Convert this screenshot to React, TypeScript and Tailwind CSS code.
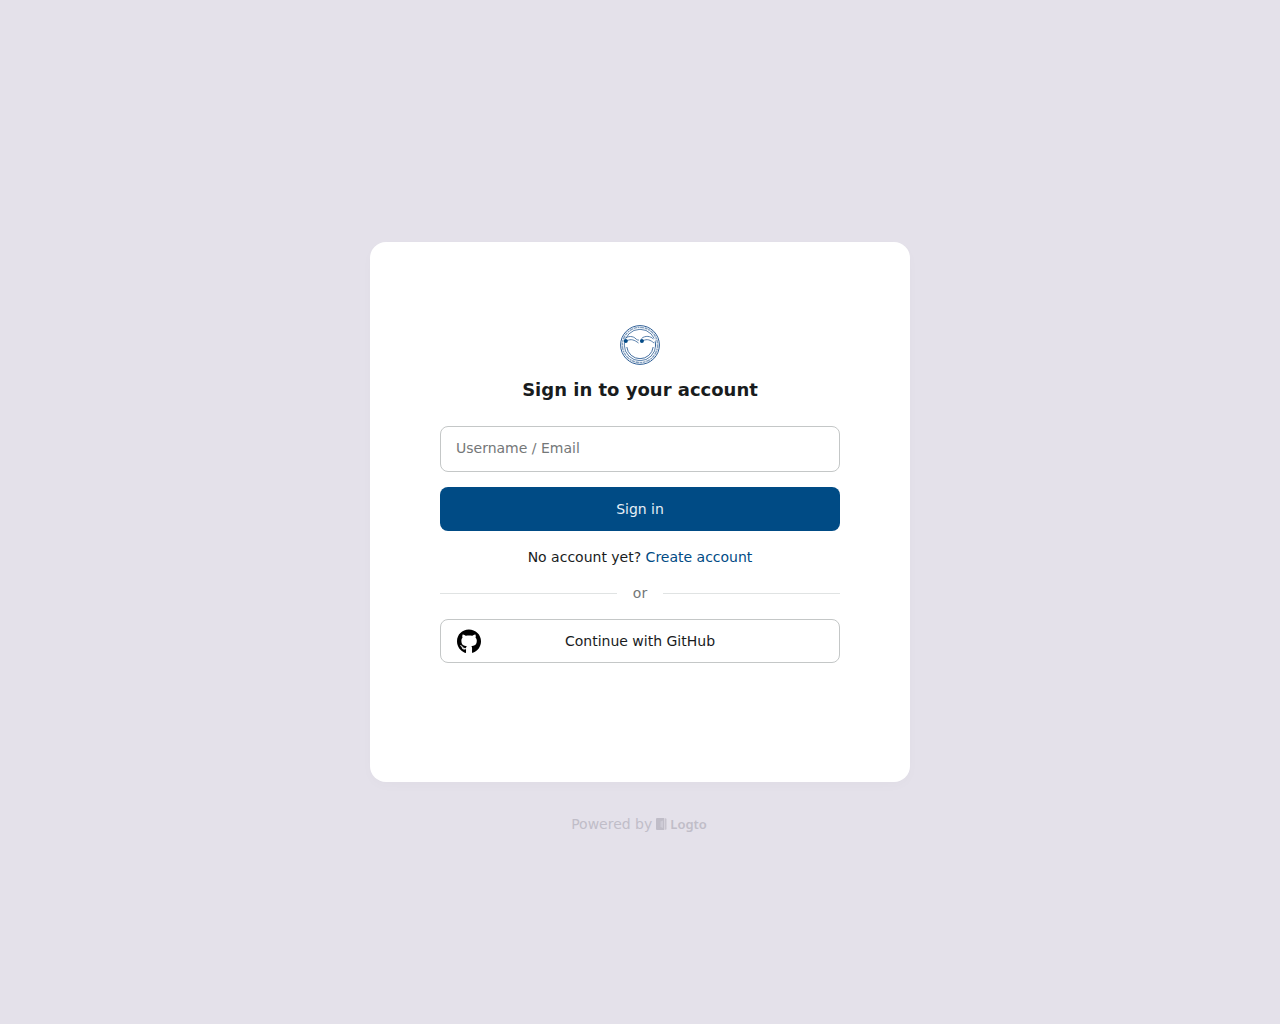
import React from 'react';
import { FaGithub } from 'react-icons/fa';

function SealLogo() {
  return (
    <svg viewBox="0 0 40 40" className="size-10" fill="none" stroke="#2f5f96" role="img" aria-label="Company logo">
      <circle cx="20" cy="20" r="19.4" strokeWidth="1" />
      <circle cx="20" cy="20" r="17.6" strokeWidth="1.4" strokeDasharray="3 0.6 2 0.6 4 0.7" opacity="0.6" />
      <circle cx="20" cy="20" r="15.700" strokeWidth="0.8" />
      <path d="M5 13.500h30v7.500h-30z" fill="#fff" stroke="none" />
      <path d="M35 16.500a15.700 15.700 0 0 1 .5 5" strokeWidth="0.8" />
      <path d="M4.500 14c3-3.400 9-3.200 11.500 0 1 .9 2 1.200 3 1M21.500 13.500c3.500-3.200 9.500-2.600 12 .8" strokeWidth="0.8" />
      <path d="M7 15.800c4-2.300 7.500-.8 11.500 2.200M23 15.800c4-2.300 7.500-.8 11 2.200" strokeWidth="0.8" />
      <circle cx="5.800" cy="15.900" r="2" fill="#044b87" stroke="none" />
      <circle cx="21.900" cy="15.900" r="2" fill="#044b87" stroke="none" />
      <path d="M6.800 22a13.300 13.300 0 0 0 26.400 0" strokeWidth="0.9" />
    </svg>
  );
}

function DoorIcon() {
  return (
    <svg viewBox="0 0 11 12" className="h-3 w-[11px]" fill="currentColor" aria-hidden="true">
      <path d="M1 0h7v12H1a1 1 0 0 1-1-1V1a1 1 0 0 1 1-1z" />
      <path d="M4.500 3.500l2.500-1v7.500l-2.500-1z" fill="#e4e1ea" opacity="0.4" />
      <path d="M8.500.3h1a1 1 0 0 1 1 1v9.400a1 1 0 0 1-1 1h-1z" opacity="0.8" />
    </svg>
  );
}

export default function App() {
  return (
    <div className="grid min-h-screen grid-rows-[1fr_auto_1fr] justify-items-center bg-[#e4e1ea] font-['DejaVu_Sans',sans-serif] text-sm text-[#191c1d]">
      <main className="row-start-2 flex min-h-[540px] w-full max-w-[540px] flex-col justify-center rounded-2xl bg-white px-[70px] pb-9 shadow-[0_4px_12px_rgba(0,0,0,0.02)]">
        <div className="flex flex-col items-center gap-[13px]">
          <SealLogo />
          <h1 className="text-lg leading-6 font-bold">Sign in to your account</h1>
        </div>
        <form className="mt-6 flex flex-col gap-[15px]" onSubmit={(e) => e.preventDefault()}>
          <input
            type="text"
            aria-label="Username / Email"
            placeholder="Username / Email"
            className="h-[46px] w-full rounded-lg border border-[#c4c7c7] px-[15px] pb-0.5 placeholder:text-[#747778] outline-none focus:border-[#004b85]"
          />
          <button type="submit" className="h-11 rounded-lg bg-[#004b85] text-[#e6eff7]">
            Sign in
          </button>
        </form>
        <p className="mt-4 text-center">
          No account yet?{' '}
          <a href="#register" className="text-[#004b85]">
            Create account
          </a>
        </p>
        <div className="mt-4 mb-[15px] flex items-center gap-4 leading-[21px] text-[#747778]">
          <span className="h-px flex-1 bg-[#e0e3e3]" />
          <span>or</span>
          <span className="h-px flex-1 bg-[#e0e3e3]" />
        </div>
        <button type="button" className="flex h-11 items-center rounded-lg border border-[#c4c7c7] px-4">
          <FaGithub className="h-[25px] w-6 shrink-0 text-black" aria-hidden="true" />
          <span className="flex-1 pr-6 text-center">Continue with GitHub</span>
        </button>
      </main>
      <footer className="row-start-3 pt-8">
        <a href="#logto" className="flex items-center gap-1 pr-0.5 text-[#c0bdc8]">
          <span>Powered by</span>
          <span className="flex items-center gap-[3px]">
            <DoorIcon />
            <span className="font-['Noto_Sans',sans-serif] text-[13px] font-semibold">Logto</span>
          </span>
        </a>
      </footer>
    </div>
  );
}
